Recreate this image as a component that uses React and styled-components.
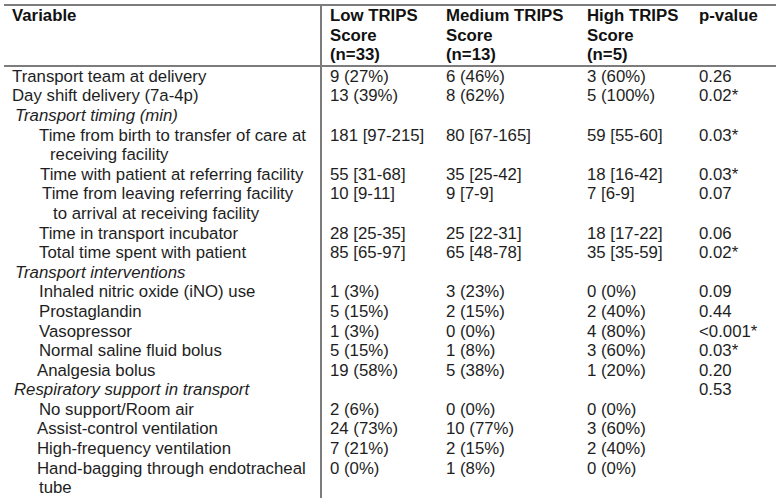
import React from "react";
import styled, { createGlobalStyle } from "styled-components";

const GlobalStyle = createGlobalStyle`
  html, body {
    margin: 0;
    padding: 0;
    background: #ffffff;
  }
  body {
    font-family: "Liberation Sans", Arial, sans-serif;
    color: #1e1e1e;
  }
`;

const Page = styled.div`
  width: 780px;
  height: 502px;
  padding: 4px 4px 0 4px;
  box-sizing: border-box;
  overflow: hidden;
`;

// five columns: variable | low | medium | high | p-value
const Grid = styled.div`
  display: grid;
  grid-template-columns: 318px 116px 141px 112px 85px;
  width: 772px;
  font-size: 16.8px;
  line-height: 19.6px;
  border-top: 2px solid #7c7c7c;
`;

const HeadCell = styled.div`
  font-weight: bold;
  color: #111;
  padding: 0 0 0 8px;
  white-space: pre-line;
  border-bottom: 2px solid #7c7c7c;
  border-right: ${(p) => (p.$first ? "2px solid #7c7c7c" : "none")};
`;

const VarCell = styled.div`
  padding: 0 2px 0 ${(p) => p.$indent + p.$hang}px;
  text-indent: -${(p) => p.$hang}px;
  white-space: pre-line;
  font-style: ${(p) => (p.$italic ? "italic" : "normal")};
  border-right: 2px solid #7c7c7c;
`;

const Cell = styled.div`
  padding: 0 0 0 8px;
  white-space: nowrap;
`;

const header = [
  "Low TRIPS\nScore\n(n=33)",
  "Medium TRIPS\nScore\n(n=13)",
  "High TRIPS\nScore\n(n=5)",
];

const rows = [
  { label: "Transport team at delivery", indent: 8, v: ["9 (27%)", "6 (46%)", "3 (60%)", "0.26"] },
  { label: "Day shift delivery (7a-4p)", indent: 8, v: ["13 (39%)", "8 (62%)", "5 (100%)", "0.02*"] },
  { label: "Transport timing (min)", indent: 11, italic: true, v: ["", "", "", ""] },
  {
    label: "Time from birth to transfer of care at\nreceiving facility",
    indent: 35,
    hang: 11,
    v: ["181 [97-215]", "80 [67-165]", "59 [55-60]", "0.03*"],
  },
  { label: "Time with patient at referring facility", indent: 36, v: ["55 [31-68]", "35 [25-42]", "18 [16-42]", "0.03*"] },
  {
    label: "Time from leaving referring facility\nto arrival at receiving facility",
    indent: 38,
    hang: 11,
    v: ["10 [9-11]", "9 [7-9]", "7 [6-9]", "0.07"],
  },
  { label: "Time in transport incubator", indent: 35, v: ["28 [25-35]", "25 [22-31]", "18 [17-22]", "0.06"] },
  { label: "Total time spent with patient", indent: 35, v: ["85 [65-97]", "65 [48-78]", "35 [35-59]", "0.02*"] },
  { label: "Transport interventions", indent: 11, italic: true, v: ["", "", "", ""] },
  { label: "Inhaled nitric oxide (iNO) use", indent: 35, v: ["1 (3%)", "3 (23%)", "0 (0%)", "0.09"] },
  { label: "Prostaglandin", indent: 35, v: ["5 (15%)", "2 (15%)", "2 (40%)", "0.44"] },
  { label: "Vasopressor", indent: 35, v: ["1 (3%)", "0 (0%)", "4 (80%)", "<0.001*"] },
  { label: "Normal saline fluid bolus", indent: 35, v: ["5 (15%)", "1 (8%)", "3 (60%)", "0.03*"] },
  { label: "Analgesia bolus", indent: 33, v: ["19 (58%)", "5 (38%)", "1 (20%)", "0.20"] },
  { label: "Respiratory support in transport", indent: 10, italic: true, v: ["", "", "", "0.53"] },
  { label: "No support/Room air", indent: 35, v: ["2 (6%)", "0 (0%)", "0 (0%)", ""] },
  { label: "Assist-control ventilation", indent: 33, v: ["24 (73%)", "10 (77%)", "3 (60%)", ""] },
  { label: "High-frequency ventilation", indent: 33, v: ["7 (21%)", "2 (15%)", "2 (40%)", ""] },
  {
    label: "Hand-bagging through endotracheal\ntube",
    indent: 33,
    hang: 2,
    v: ["0 (0%)", "1 (8%)", "0 (0%)", ""],
  },
];

const App = () => {
  return (
    <Page>
      <GlobalStyle />
      <Grid>
        <HeadCell $first>Variable</HeadCell>
        {header.map((h) => (
          <HeadCell key={h}>{h}</HeadCell>
        ))}
        <HeadCell>p-value</HeadCell>

        {rows.map((r) => (
          <React.Fragment key={r.label}>
            <VarCell $indent={r.indent} $hang={r.hang || 0} $italic={r.italic}>
              {r.label}
            </VarCell>
            {r.v.map((val, i) => (
              <Cell key={i}>{val}</Cell>
            ))}
          </React.Fragment>
        ))}
      </Grid>
    </Page>
  );
};

export default App;
